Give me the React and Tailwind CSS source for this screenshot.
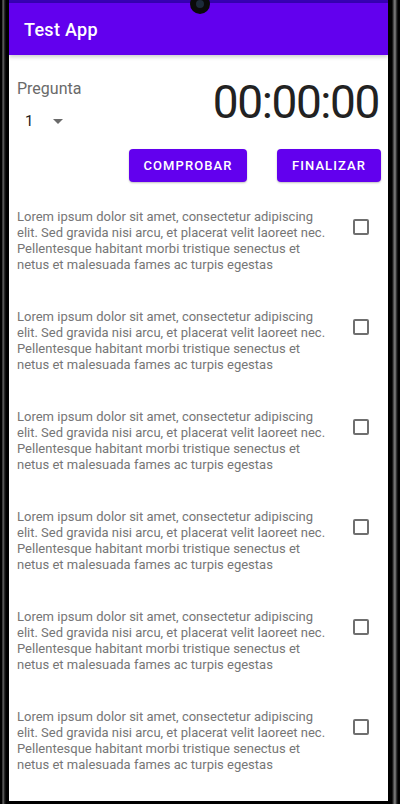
import React, { useState } from 'react';

const LOREM =
  'Lorem ipsum dolor sit amet, consectetur adipiscing elit. Sed gravida nisi arcu, et placerat velit laoreet nec. Pellentesque habitant morbi tristique senectus et netus et malesuada fames ac turpis egestas';

const Question = ({ checked, onToggle }) => (
  <div className="flex items-start h-[100px] pt-[18px] pl-[8px]">
    <p className="w-[318px] text-[13px] leading-[16px] text-[#767676]">{LOREM}</p>
    <button
      onClick={onToggle}
      className="ml-[18px] mt-[10px] w-[16px] h-[16px] rounded-[2px] border-2 border-[#6f6f6f] flex items-center justify-center"
    >
      {checked && <span className="w-[8px] h-[8px] bg-[#6f6f6f]" />}
    </button>
  </div>
);

export default function App() {
  const [checks, setChecks] = useState([false, false, false, false, false, false]);

  const toggle = (i) => {
    setChecks(prev => prev.map((v, j) => (j === i ? !v : v)));
  };

  return (
    <div className="w-[400px] h-[804px] bg-black flex overflow-hidden font-['Roboto',sans-serif]">
      {/* left bezel */}
      <div className="w-[9px] h-full bg-[linear-gradient(90deg,#000_0px,#000_2px,#777_3px,#333_4px,#000_6px)]" />

      {/* screen */}
      <div className="relative w-[379px] h-[801px] bg-white flex flex-col overflow-hidden">
        <div className="h-[3px] bg-[#3700B3]" />
        <div className="h-[52px] bg-[#6200EE] flex items-center pl-[15px] shadow-[0_2px_4px_rgba(0,0,0,0.2)] z-10">
          <span className="text-white text-[18px] font-medium tracking-[0.3px]">Test App</span>
        </div>

        {/* camera */}
        <div className="absolute left-[181px] top-[-6px] w-[20px] h-[20px] rounded-full bg-[#0a0a0a] z-20 flex items-center justify-center">
          <div className="w-[8px] h-[8px] rounded-full bg-[#1c2a3a]" />
        </div>

        {/* header */}
        <div className="flex justify-between pt-[24px] pl-[8px] pr-[9px]">
          <div className="flex flex-col">
            <span className="text-[16px] leading-[20px] text-[#6a6a6a]">Pregunta</span>
            <div className="flex items-center mt-[12px] pl-[8px]">
              <span className="text-[15px] leading-[20px] text-[#222]">1</span>
              <svg className="ml-[20px]" width="10" height="5" viewBox="0 0 10 5">
                <path d="M0 0 L10 0 L5 5 Z" fill="#6a6a6a" />
              </svg>
            </div>
          </div>
          <span className="text-[46px] leading-[46px] text-[#222] tracking-[-1.4px]">00:00:00</span>
        </div>

        {/* buttons */}
        <div className="flex justify-end gap-[30px] pr-[7px] mt-[18px]">
          <button className="w-[118px] h-[33px] rounded-[4px] bg-[#6200EE] text-white text-[13px] font-medium tracking-[1.1px] shadow-[0_1px_2px_rgba(0,0,0,0.25)]">
            COMPROBAR
          </button>
          <button className="w-[104px] h-[33px] rounded-[4px] bg-[#6200EE] text-white text-[13px] font-medium tracking-[1.1px] shadow-[0_1px_2px_rgba(0,0,0,0.25)]">
            FINALIZAR
          </button>
        </div>

        {/* questions */}
        <div className="flex flex-col mt-[9px]">
          {checks.map((c, i) => (
            <Question key={i} checked={c} onToggle={() => toggle(i)} />
          ))}
        </div>
      </div>

      {/* right bezel */}
      <div className="w-[12px] h-full bg-[linear-gradient(90deg,#000_0px,#000_4px,#333_5px,#888_7px,#444_8px,#000_10px)]" />
    </div>
  );
}
